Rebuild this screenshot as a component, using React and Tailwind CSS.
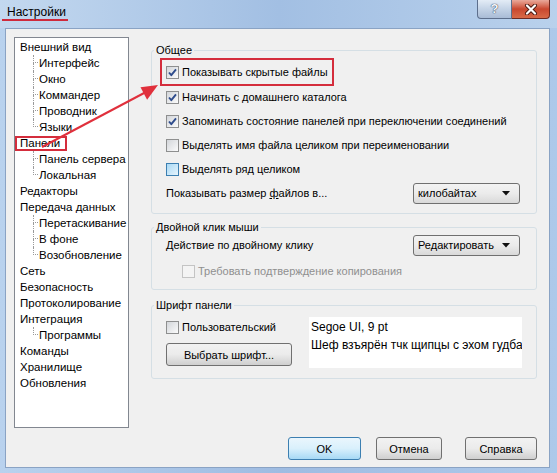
import React from "react";

const tree = [
  ["Внешний вид", ["Интерфейс", "Окно", "Коммандер", "Проводник", "Языки"]],
  ["Панели", ["Панель сервера", "Локальная"]],
  ["Редакторы", []],
  ["Передача данных", ["Перетаскивание", "В фоне", "Возобновление"]],
  ["Сеть", []],
  ["Безопасность", []],
  ["Протоколирование", []],
  ["Интеграция", ["Программы"]],
  ["Команды", []],
  ["Хранилище", []],
  ["Обновления", []],
];

function Check({ checked, hover, disabled }) {
  let box = "border-[#8e8f8f] bg-linear-to-br from-[#d3d6da] to-[#fbfbfb]";
  if (hover) box = "border-[#3c7fb1] bg-linear-to-br from-[#a9d9f5] to-[#e6f4fc]";
  if (disabled) box = "border-[#c4c4c4] bg-[#f4f4f4]";
  return (
    <div className={`w-[13px] h-[13px] shrink-0 border ${box} flex items-center justify-center`}>
      {checked && (
        <svg width="11" height="11" viewBox="0 0 11 11">
          <path d="M2 5.5 L4.3 8.2 L9 2.3" fill="none" stroke="#2e4c8c" strokeWidth="1.9" strokeLinejoin="round" />
        </svg>
      )}
    </div>
  );
}

function CheckRow({ label, checked, hover, disabled, className = "" }) {
  return (
    <div className={`flex items-center h-[24px] whitespace-nowrap ${className}`}>
      <Check checked={checked} hover={hover} disabled={disabled} />
      <span className={`ml-[3px] ${disabled ? "text-[#8f8f8f]" : "text-black"}`}>{label}</span>
    </div>
  );
}

function Combo({ value }) {
  return (
    <div className="w-[107px] h-[21px] rounded-[3px] border border-[#707070] bg-linear-to-b from-[#f3f3f3] via-[#ebebeb] to-[#d9d9d9] flex items-center justify-between pl-[4px] pr-[9px] whitespace-nowrap">
      <span>{value}</span>
      <svg width="8" height="5" viewBox="0 0 8 5" className="shrink-0">
        <path d="M0 0 L8 0 L4 4.5 Z" fill="#111" />
      </svg>
    </div>
  );
}

function Button({ children, w, primary }) {
  const cls = primary
    ? "border-[#3c7fb1] bg-linear-to-b from-[#eaf6fd] via-[#d9f0fc] to-[#a7d9f5]"
    : "border-[#707070] bg-linear-to-b from-[#f2f2f2] via-[#ebebeb] to-[#cfcfcf]";
  return (
    <div className={`${w} h-[23px] rounded-[3px] border ${cls} flex items-center justify-center text-black`}>
      {children}
    </div>
  );
}

function Group({ title, children, className = "" }) {
  return (
    <fieldset className={`border border-[#d5dfe5] rounded-[3px] ${className}`}>
      <legend className="ml-[2px] px-[2px] leading-[14px] text-black">{title}</legend>
      {children}
    </fieldset>
  );
}

export default function App() {
  return (
    <div className="relative w-[557px] h-[473px] overflow-hidden bg-linear-to-r from-[#b9d2ee] via-[#9fbce2] to-[#aec9ea] font-['Liberation_Sans',sans-serif] text-[11px] leading-[16px] text-black">
      {/* title bar */}
      <div className="h-[28px] flex items-start justify-between bg-linear-to-r from-[#c3d8ef] via-[#a2bfe3] to-[#b9d1ec]">
        <div className="ml-[2px] mt-[5px] pl-[5px] pr-[2px] border-b-2 border-[#cf2a3c] leading-[14px] text-[12px] text-black">
          Настройки
        </div>
        <div className="flex mr-[7px]">
          <div className="w-[35px] h-[19px] rounded-bl-[4px] border border-t-0 border-[#5d6f8c] bg-linear-to-b from-[#e3ecf6] via-[#c4d3e6] to-[#a9bcd6] flex items-center justify-center">
            <span className="text-[13px] font-bold text-[#f4f6f8] [text-shadow:0_0_1px_#2a3a55,0_0_1px_#2a3a55]">?</span>
          </div>
          <div className="w-[38px] h-[19px] rounded-br-[4px] border border-l-0 border-t-0 border-[#6d2a22] bg-linear-to-b from-[#e9a99b] via-[#c9472f] to-[#d86a48] flex items-center justify-center">
            <svg width="14" height="11" viewBox="0 0 14 11">
              <path d="M3 1.5 L11 9.5 M11 1.5 L3 9.5" stroke="#4a1810" strokeWidth="4" strokeLinecap="round" />
              <path d="M3 1.5 L11 9.5 M11 1.5 L3 9.5" stroke="#ffffff" strokeWidth="2.2" strokeLinecap="round" />
            </svg>
          </div>
        </div>
      </div>

      {/* client area */}
      <div className="ml-[5px] w-[545px] h-[440px] border border-[#8aa3c4] bg-[#f0f0f0] flex flex-col">
        <div className="flex pl-[8px] pt-[8px]">
          {/* tree */}
          <div className="w-[115px] h-[391px] border border-[#828790] bg-white pt-[1px] text-[11.5px]">
            {tree.map(([name, kids]) => (
              <div key={name}>
                <div className="h-[16px] flex items-center pl-[5px] whitespace-nowrap">
                  {name === "Панели" ? (
                    <span className="-ml-[5px] border-2 border-[#d42d3c] pl-[3px] pr-[5px] leading-[11px]">{name}</span>
                  ) : (
                    <span>{name}</span>
                  )}
                </div>
                {kids.map((k, i) => (
                  <div key={k} className="h-[16px] flex items-center pl-[5px] whitespace-nowrap">
                    <div className="ml-[13px] w-[5px] h-[16px] flex flex-col">
                      <div className="h-[8px] border-l border-b border-dotted border-[#9a9a9a]" />
                      <div className={`h-[8px] ${i < kids.length - 1 ? "border-l border-dotted border-[#9a9a9a]" : ""}`} />
                    </div>
                    <span className="ml-[1px]">{k}</span>
                  </div>
                ))}
              </div>
            ))}
          </div>

          {/* right column */}
          <div className="ml-[22px] mt-[6px] w-[386px] flex flex-col">
            <Group title="Общее" className="pb-[8px]">
              <div className="pt-[4px] pl-[14px] pr-[16px] flex flex-col">
                <div className="-ml-[6px] -mt-[3px] -mb-[1px] w-fit border-2 border-[#d42d3c] pl-[4px] pr-[4px]">
                  <CheckRow label="Показывать скрытые файлы" checked />
                </div>
                <CheckRow label="Начинать с домашнего каталога" checked />
                <CheckRow label="Запоминать состояние панелей при переключении соединений" checked />
                <CheckRow label="Выделять имя файла целиком при переименовании" />
                <CheckRow label="Выделять ряд целиком" hover />
                <div className="h-[24px] flex items-center justify-between whitespace-nowrap">
                  <span>
                    Показывать размер <u>ф</u>айлов в...
                  </span>
                  <Combo value="килобайтах" />
                </div>
              </div>
            </Group>

            <Group title="Двойной клик мыши" className="mt-[6px] pb-[7px]">
              <div className="pl-[14px] pr-[16px] flex flex-col">
                <div className="h-[22px] flex items-center justify-between whitespace-nowrap">
                  <span>
                    <u>Д</u>ействие по двойному клику
                  </span>
                  <Combo value="Редактировать" />
                </div>
                <CheckRow label="Требовать подтверждение копирования" disabled className="mt-[4px] !h-[22px] pl-[16px]" />
              </div>
            </Group>

            <Group title="Шрифт панели" className="mt-[8px] pb-[10px]">
              <div className="pt-[5px] pl-[14px] flex">
                <div className="w-[143px] flex flex-col">
                  <div className="h-[20px] flex items-center">
                    <Check />
                    <span className="ml-[3px]">Пользовательский</span>
                  </div>
                  <div className="mt-[6px]">
                    <Button w="w-[126px]">Выбрать шрифт...</Button>
                  </div>
                </div>
                <div className="w-[213px] h-[51px] bg-white pl-[2px] pt-[1px] leading-[18px] overflow-hidden whitespace-nowrap text-[12px]">
                  <div>Segoe UI, 9 pt</div>
                  <div>Шеф взъярён тчк щипцы с эхом гудбай</div>
                </div>
              </div>
            </Group>
          </div>
        </div>

        {/* bottom buttons */}
        <div className="mt-[9px] flex justify-end pr-[12px]">
          <Button w="w-[73px]" primary>OK</Button>
          <div className="ml-[15px]">
            <Button w="w-[66px]">Отмена</Button>
          </div>
          <div className="ml-[23px]">
            <Button w="w-[72px]">Справка</Button>
          </div>
        </div>
      </div>

      {/* annotation arrow */}
      <svg className="absolute inset-0 pointer-events-none" width="557" height="473" viewBox="0 0 557 473">
        <line x1="42" y1="147" x2="146" y2="92" stroke="#e0303c" strokeWidth="2" />
        <path d="M158 85 L147.1 99.7 L140.5 87.3 Z" fill="#e0303c" />
      </svg>
    </div>
  );
}
